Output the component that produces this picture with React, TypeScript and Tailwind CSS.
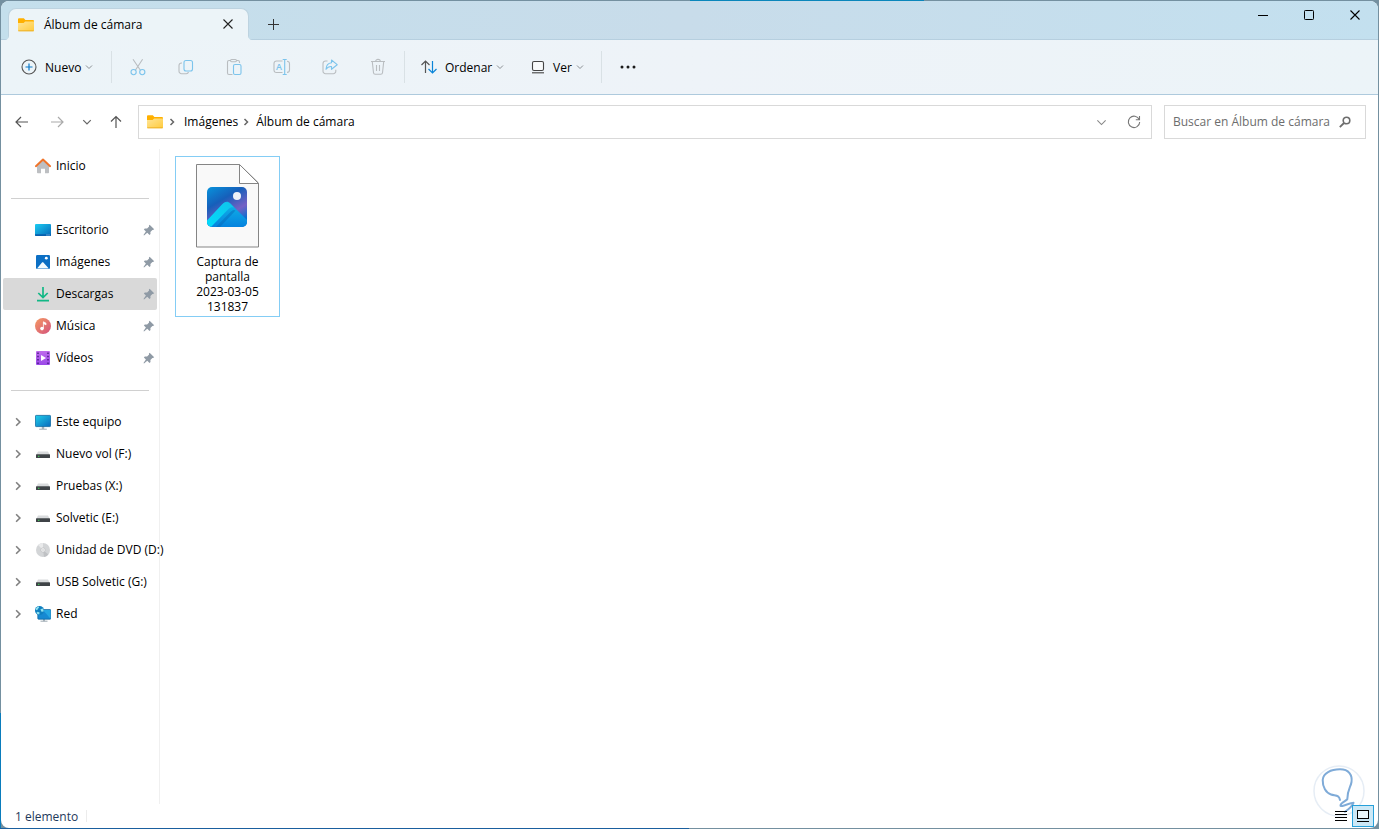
import { useState } from 'react'
import type { ReactNode } from 'react'

/* ---------- Icons ---------- */

function FolderIcon() {
    return (
        <svg width="16" height="14" viewBox="0 0 16 14" className="shrink-0">
            <defs>
                <linearGradient id="folder" x1="0" y1="0" x2="1" y2="1">
                    <stop offset="0" stopColor="#ffe596" />
                    <stop offset="1" stopColor="#ffcb3d" />
                </linearGradient>
            </defs>
            <path d="M0 1.5C0 .7.5.3 1.2.3h4.6l1.6 1.8h7.4c.7 0 1.2.4 1.2 1.2v4H0z" fill="#ffb000" />
            <path d="M0 4.9h5.6l1.5-1.3H16v8.6c0 .7-.5 1-1.2 1H1.2c-.7 0-1.2-.3-1.2-1z" fill="url(#folder)" />
            <path d="M.3 12.8h15.4" stroke="#e9a91c" strokeWidth=".8" />
        </svg>
    )
}

function Chevron({ className, dir = 'down', size = 8, width = 1 }: { className?: string; dir?: 'down' | 'right'; size?: number; width?: number }) {
    return (
        <svg width={size} height={size} viewBox="0 0 8 8" fill="none" stroke="currentColor" strokeWidth={width} className={className}>
            <path d={dir === 'down' ? 'M1 2.5l3 3 3-3' : 'M2.5 1l3 3-3 3'} />
        </svg>
    )
}

function CloseIcon({ size = 10 }: { size?: number }) {
    return (
        <svg width={size} height={size} viewBox="0 0 10 10" stroke="currentColor" strokeWidth="1.1">
            <path d="M.5.5l9 9M9.5.5l-9 9" />
        </svg>
    )
}

function PinIcon() {
    return (
        <svg width="12" height="12" viewBox="0 0 12 12" className="shrink-0 text-[#8f9aa5]" fill="currentColor">
            <path d="M6.6.8l4.6 4.4-1.2.9-.6-.2-2 2 .1 2.200-1 .8-2.200-2.100L1 11.400.5 11l2.400-3.400L.9 5.400l.9-1 2.300.2 2-2-.2-.9z" />
        </svg>
    )
}

function DriveIcon() {
    return (
        <svg width="16" height="16" viewBox="0 0 16 16">
            <path d="M3 5.500h10l1.800 3.200H1.200z" fill="#d9dbdd" />
            <rect x="1" y="8.300" width="14" height="3.700" rx=".6" fill="#3f4347" />
            <rect x="3" y="9.800" width="1.400" height="1" fill="#3ddc58" />
        </svg>
    )
}

const navIcons: Record<string, ReactNode> = {
    home: (
        <svg width="16" height="16" viewBox="0 0 16 16">
            <path d="M2 7l6-5.500L14 7v7.500c0 .5-.3.8-.8.8H10v-4.500H6v4.500H2.800c-.5 0-.8-.3-.8-.8z" fill="#bdbfc2" />
            <path d="M.9 8.200L8 1.500l7.100 6.700" fill="none" stroke="#f0742a" strokeWidth="1.900" strokeLinecap="round" strokeLinejoin="round" />
        </svg>
    ),
    desktop: (
        <svg width="16" height="16" viewBox="0 0 16 16">
            <defs>
                <linearGradient id="desk" x1="0" y1="0" x2="1" y2="1">
                    <stop offset="0" stopColor="#1ccdf2" />
                    <stop offset="1" stopColor="#0667b9" />
                </linearGradient>
            </defs>
            <rect y="2" width="16" height="12" rx="1" fill="url(#desk)" />
            <path d="M0 12.200h16v.8a1 1 0 01-1 1H1a1 1 0 01-1-1z" fill="#075fae" />
            <path d="M11.500 13h1M13.500 13h1" stroke="#bfe6ff" strokeWidth="1" />
        </svg>
    ),
    images: (
        <svg width="16" height="16" viewBox="0 0 16 16">
            <rect x="1" y="1" width="14" height="14" rx="1.200" fill="#0c6fc4" />
            <path d="M2 14.400l5-5.800c.4-.5 1-.5 1.400 0l5.400 5.800z" fill="#f3fbff" />
            <circle cx="11.300" cy="4.200" r="1.400" fill="#fff" />
        </svg>
    ),
    downloads: (
        <svg width="16" height="16" viewBox="0 0 16 16" fill="none" stroke="#12b886" strokeWidth="1.700">
            <path d="M8 1v10M3.300 7L8 11.600 12.700 7M2 14.700h12" />
        </svg>
    ),
    music: (
        <svg width="16" height="16" viewBox="0 0 16 16">
            <defs>
                <linearGradient id="music" x1="0" y1="0" x2="1" y2="1">
                    <stop offset="0" stopColor="#f59a62" />
                    <stop offset="1" stopColor="#d3517d" />
                </linearGradient>
            </defs>
            <circle cx="8" cy="8" r="8" fill="url(#music)" />
            <circle cx="7" cy="10.600" r="1.800" fill="#fff" />
            <path d="M8.400 10.600V3.800l2.600 1.400v1.600L8.400 5.600" fill="#fff" stroke="#fff" strokeWidth=".8" />
        </svg>
    ),
    videos: (
        <svg width="16" height="16" viewBox="0 0 16 16">
            <defs>
                <linearGradient id="video" x1="0" y1="0" x2="0" y2="1">
                    <stop offset="0" stopColor="#c06cec" />
                    <stop offset="1" stopColor="#9a48e8" />
                </linearGradient>
            </defs>
            <rect x="1" y="1" width="14" height="14" rx="1" fill="url(#video)" />
            <path d="M3 2.500v12M13 2.500v12" stroke="#4a1d86" strokeWidth="1.500" strokeDasharray="1.500 1.800" />
            <path d="M6 5l5 3-5 3z" fill="#fff" />
        </svg>
    ),
    pc: (
        <svg width="16" height="16" viewBox="0 0 16 16">
            <defs>
                <linearGradient id="pc" x1="0" y1="0" x2="1" y2="1">
                    <stop offset="0" stopColor="#20d0ea" />
                    <stop offset="1" stopColor="#0869bd" />
                </linearGradient>
            </defs>
            <path d="M6.800 12h2.400v3H6.800z" fill="#a9b4bd" />
            <path d="M4.200 15.200h7.600" stroke="#9eaab3" strokeWidth="1" />
            <rect x=".4" y="1.400" width="15.200" height="11.200" rx=".8" fill="url(#pc)" stroke="#0e679f" strokeWidth=".8" />
        </svg>
    ),
    drive: <DriveIcon />,
    dvd: (
        <svg width="16" height="16" viewBox="0 0 16 16">
            <circle cx="8" cy="8" r="7" fill="#d3d5d7" />
            <path d="M8 8L3 3a7 7 0 015-2z" fill="#e9eaeb" />
            <path d="M8 8l5.400 4.400A7 7 0 019 15z" fill="#bfc1c4" />
            <circle cx="8" cy="8" r="2.200" fill="#f4f4f4" stroke="#b4b6b8" strokeWidth=".6" />
            <circle cx="8" cy="8" r=".8" fill="#c5c7c9" />
        </svg>
    ),
    network: (
        <svg width="16" height="16" viewBox="0 0 16 16">
            <path d="M8 13h2v2.200H8z" fill="#a9b4bd" />
            <path d="M5.500 15.200h7" stroke="#9eaab3" strokeWidth="1" />
            <rect x="2.800" y="3.600" width="13" height="9.600" rx=".7" fill="#1789d2" stroke="#0b619a" strokeWidth=".7" />
            <path d="M8 4l7.500 8.800V4z" fill="#25a6e2" />
            <circle cx="4.500" cy="4.500" r="4.500" fill="#0f7fc0" />
            <path d="M.6 3.200C1.400 1.500 2.600.7 4 .5c.4 1-.4 1.700-1 2.200-.5.600-.4 1.300-1.300 1.500zM5.400 3.200l2.400-.8c.7.9 1 1.900.8 3L6.500 5.800zM2.600 5.800l2 .8-.4 1.900C2.900 8.400 2 7.600 1.400 6.700z" fill="#8fe3ef" />
        </svg>
    ),
}

const svgBase = { width: 18, height: 18, viewBox: '0 0 18 18', fill: 'none', strokeWidth: 1.1 }
const GREY = '#b9bdc0'
const BLUE = '#7cc4ec'

const fileActions = [
    {
        label: 'Cortar',
        icon: (
            <svg {...svgBase}>
                <path d="M4 1.200l7.600 11.300M13.600 1.200L6.200 12.500" stroke={GREY} />
                <circle cx="4.600" cy="14.100" r="2.600" stroke={BLUE} />
                <circle cx="13.300" cy="14.100" r="2.600" stroke={BLUE} />
            </svg>
        ),
    },
    {
        label: 'Copiar',
        icon: (
            <svg {...svgBase}>
                <path d="M5 5H4.500A2.500 2.500 0 002 7.500v5.700a2.500 2.500 0 002.500 2.500h4.800A2.500 2.500 0 0011.500 14" stroke={GREY} />
                <rect x="7" y="2.500" width="8.500" height="10.500" rx="2" stroke={BLUE} />
            </svg>
        ),
    },
    {
        label: 'Pegar',
        icon: (
            <svg {...svgBase}>
                <path d="M7.500 16.500H4a1.500 1.500 0 01-1.500-1.500V4A1.500 1.500 0 014 2.500h1.500M11.500 2.500H13A1.500 1.500 0 0114.500 4v1" stroke={GREY} />
                <rect x="5.500" y="1.500" width="6" height="2.200" rx="1.100" stroke={GREY} />
                <rect x="8.500" y="6.500" width="7.500" height="10" rx="1.500" stroke={BLUE} />
            </svg>
        ),
    },
    {
        label: 'Cambiar nombre',
        icon: (
            <svg {...svgBase}>
                <path d="M9.500 14.500h-6A2.500 2.500 0 011 12V5.500A2.500 2.500 0 013.500 3h6M14 3.200a2.500 2.500 0 012.500 2.500V12a2.500 2.500 0 01-2.500 2.400" stroke={GREY} />
                <path d="M9.700 1.500h4M9.700 16.500h4M11.700 1.500v15" stroke={BLUE} />
                <text x="3" y="12" fontSize="9" fontWeight="600" fill={BLUE} stroke="none">A</text>
            </svg>
        ),
    },
    {
        label: 'Compartir',
        icon: (
            <svg {...svgBase}>
                <path d="M6.500 3H4.500A2.500 2.500 0 002 5.500v7.700a2.500 2.500 0 002.500 2.500h7.800a2.500 2.500 0 002.500-2.500v-1.400" stroke={GREY} />
                <path d="M10.500 2l5.700 4.700-5.700 4.600V8.500C8 8.300 6.300 9.300 5 11.300c.2-3.800 2-6.100 5.500-6.500z" stroke={BLUE} strokeLinejoin="round" />
            </svg>
        ),
    },
    {
        label: 'Eliminar',
        icon: (
            <svg {...svgBase} stroke={GREY}>
                <path d="M2 3.500h14M6.700 3.300c0-2.600 4.600-2.600 4.600 0M3.300 3.700l1.200 11c.1 1 .7 1.600 1.700 1.600h5.600c1 0 1.600-.6 1.700-1.600l1.200-11M7.500 7v6M10.500 7v6" />
            </svg>
        ),
    },
]

/* ---------- Sidebar ---------- */

type NavEntry = { label: string; icon: string }

const pinned: NavEntry[] = [
    { label: 'Escritorio', icon: 'desktop' },
    { label: 'Imágenes', icon: 'images' },
    { label: 'Descargas', icon: 'downloads' },
    { label: 'Música', icon: 'music' },
    { label: 'Vídeos', icon: 'videos' },
]

const devices: NavEntry[] = [
    { label: 'Este equipo', icon: 'pc' },
    { label: 'Nuevo vol (F:)', icon: 'drive' },
    { label: 'Pruebas (X:)', icon: 'drive' },
    { label: 'Solvetic (E:)', icon: 'drive' },
    { label: 'Unidad de DVD (D:)', icon: 'dvd' },
    { label: 'USB Solvetic (G:)', icon: 'drive' },
    { label: 'Red', icon: 'network' },
]

function NavItem({ entry, active, pin, expandable, onClick }: { entry: NavEntry; active?: boolean; pin?: boolean; expandable?: boolean; onClick: () => void }) {
    return (
        <li>
            <button
                onClick={onClick}
                className={`flex h-8 w-full items-center rounded-xs pr-0.5 pl-2.5 text-left whitespace-nowrap ${active ? 'bg-[#d9d9d9]' : 'hover:bg-gray-100'}`}
            >
                <span className="w-[22px] shrink-0 text-[#808080]">
                    {expandable && <Chevron dir="right" size={10} width={1.3} />}
                </span>
                <span className="mr-[5px] shrink-0">{navIcons[entry.icon]}</span>
                <span className="flex-1">{entry.label}</span>
                {pin && <PinIcon />}
            </button>
        </li>
    )
}

function Divider() {
    return <hr className="mx-2 my-4 h-px border-0 bg-[#d0d0d0]" />
}

function ToolbarSeparator() {
    return <span className="mx-0.5 h-8 w-px bg-[#d9e1e5]" />
}

/* ---------- App ---------- */

export default function App() {
    const [selected, setSelected] = useState('Descargas')
    const [query, setQuery] = useState('')

    return (
        <div className="h-screen w-full overflow-hidden bg-[#7490a0] p-px font-['Open_Sans','Noto_Sans',sans-serif] text-xs text-black">
            <div className="relative flex h-full flex-col rounded-lg bg-white">

                {/* Wallpaper showing along the window edges */}
                <span className="absolute -top-px left-1/2 h-px w-[17%] bg-[#0a86bb]" />
                <span className="absolute -bottom-px -left-px h-[14%] w-px bg-[#0a7cbc]" />
                <span className="absolute -bottom-px -left-px h-px w-1/2 bg-[#1a5f9e]" />

                {/* Title bar */}
                <header className="flex h-[39px] shrink-0 items-end justify-between rounded-t-lg border-b border-[#b6cfdf] bg-linear-to-r from-[#c4dfec] via-[#c8dcea] to-[#c3e0ef] pl-[7px]">
                    <div className="flex items-end">
                        <div className="relative -mb-px flex h-8 w-[241px] items-center rounded-t-lg border border-b-0 border-[#bdd3e0] bg-[#ecf4f8] pl-[9px]">
                            <FolderIcon />
                            <h1 className="ml-2.5 flex-1 pt-px whitespace-nowrap">Álbum de cámara</h1>
                            <button aria-label="Cerrar pestaña" className="mr-1.5 flex size-7 items-center justify-center pb-px text-[#222]">
                                <CloseIcon />
                            </button>
                            <svg width="4" height="4" viewBox="0 0 4 4" className="absolute bottom-0 -left-1">
                                <path d="M4 0v4H0c2 0 4-2 4-4z" fill="#ecf4f8" />
                            </svg>
                            <svg width="4" height="4" viewBox="0 0 4 4" className="absolute -right-1 bottom-0">
                                <path d="M0 0v4h4C2 4 0 2 0 0z" fill="#ecf4f8" />
                            </svg>
                        </div>
                        <button aria-label="Nueva pestaña" className="ml-2 flex h-[30px] w-8 items-center justify-center text-[#333]">
                            <svg width="11" height="11" viewBox="0 0 11 11" stroke="currentColor">
                                <path d="M5.500 0v11M0 5.500h11" />
                            </svg>
                        </button>
                    </div>
                    <div className="flex self-start">
                        <button aria-label="Minimizar" className="flex h-7 w-[46px] items-center justify-center">
                            <svg width="10" height="10" viewBox="0 0 10 10" stroke="currentColor"><path d="M0 5.500h10" /></svg>
                        </button>
                        <button aria-label="Maximizar" className="flex h-7 w-[46px] items-center justify-center">
                            <svg width="10" height="10" viewBox="0 0 10 10" fill="none" stroke="currentColor"><rect x=".5" y=".5" width="9" height="9" rx=".8" /></svg>
                        </button>
                        <button aria-label="Cerrar" className="flex h-7 w-[46px] items-center justify-center">
                            <CloseIcon />
                        </button>
                    </div>
                </header>

                {/* Toolbar */}
                <div className="flex h-[55px] shrink-0 items-center border-b border-[#aecadd] bg-linear-to-r from-[#ecf4f8] via-[#eef3f8] to-[#ecf4f8] pl-3">
                    <button className="flex h-8 w-24 items-center pl-2">
                        <svg width="16" height="16" viewBox="0 0 16 16" fill="none">
                            <circle cx="8" cy="8" r="7" stroke="#555" strokeWidth="1.100" />
                            <path d="M8 4.500v7M4.500 8h7" stroke="#0a78c8" strokeWidth="1.200" />
                        </svg>
                        <span className="mr-1 ml-2 pt-0.5">Nuevo</span>
                        <Chevron className="text-[#8a8f93]" />
                    </button>
                    <ToolbarSeparator />
                    {fileActions.map((action) => (
                        <button key={action.label} aria-label={action.label} className="flex h-8 w-12 items-center justify-center">
                            {action.icon}
                        </button>
                    ))}
                    <ToolbarSeparator />
                    <button className="flex h-8 w-28 items-center pl-3.5">
                        <svg width="16" height="14" viewBox="0 0 16 14" fill="none" strokeWidth="1.200">
                            <path d="M4.500 13V1M.5 5l4-4 4 4" stroke="#555" />
                            <path d="M11.500 1v12M7.500 9l4 4 4-4" stroke="#0a84d8" />
                        </svg>
                        <span className="mr-1 ml-2 pt-0.5">Ordenar</span>
                        <Chevron className="text-[#8a8f93]" />
                    </button>
                    <button className="flex h-8 w-20 items-center pl-3">
                        <svg width="14" height="14" viewBox="0 0 14 14" fill="none" stroke="#444" strokeWidth="1.100">
                            <rect x="1.500" y="1.500" width="11" height="9" rx="1.500" fill="#f8fafb" />
                            <path d="M1 12.800h12" />
                        </svg>
                        <span className="mr-1 ml-2 pt-0.5">Ver</span>
                        <Chevron className="text-[#8a8f93]" />
                    </button>
                    <ToolbarSeparator />
                    <button aria-label="Ver más" className="flex h-8 w-12 items-center justify-center">
                        <svg width="16" height="4" viewBox="0 0 16 4" fill="#1a1a1a">
                            <circle cx="2" cy="2" r="1.500" />
                            <circle cx="8" cy="2" r="1.500" />
                            <circle cx="14" cy="2" r="1.500" />
                        </svg>
                    </button>
                </div>

                {/* Navigation and address */}
                <div className="flex shrink-0 items-center py-2.5 pr-3 pl-1">
                    <button aria-label="Atrás" className="flex h-8 w-[34px] items-center justify-center text-[#555]">
                        <svg width="14" height="12" viewBox="0 0 14 12" fill="none" stroke="currentColor" strokeWidth="1.200"><path d="M13 6H1M6 1L1 6l5 5" /></svg>
                    </button>
                    <button aria-label="Adelante" className="flex h-8 w-9 items-center justify-center text-[#aaa]">
                        <svg width="14" height="12" viewBox="0 0 14 12" fill="none" stroke="currentColor" strokeWidth="1.200"><path d="M1 6h12M8 1l5 5-5 5" /></svg>
                    </button>
                    <button aria-label="Ubicaciones recientes" className="flex h-8 w-6 items-center justify-center text-[#666]">
                        <Chevron size={10} />
                    </button>
                    <button aria-label="Subir" className="flex h-8 w-[34px] items-center justify-center text-[#555]">
                        <svg width="12" height="14" viewBox="0 0 12 14" fill="none" stroke="currentColor" strokeWidth="1.200"><path d="M6 13V1.500M1 6.500l5-5 5 5" /></svg>
                    </button>
                    <nav aria-label="Ruta" className="ml-[5px] flex h-[34px] flex-1 items-center border border-[#d9d9d9] pl-2">
                        <FolderIcon />
                        <Chevron dir="right" size={8} width={1.5} className="mr-2 ml-[5px] text-[#666]" />
                        <a href="#imagenes">Imágenes</a>
                        <Chevron dir="right" size={8} width={1.5} className="mr-1.5 ml-1 text-[#666]" />
                        <a href="#album" className="flex-1">Álbum de cámara</a>
                        <button aria-label="Ubicaciones anteriores" className="flex h-8 w-8 items-center justify-center text-[#888]">
                            <Chevron size={11} width={0.8} />
                        </button>
                        <button aria-label="Actualizar" className="flex h-8 w-[34px] items-center justify-center text-[#777]">
                            <svg width="14" height="14" viewBox="0 0 14 14" fill="none" stroke="currentColor" strokeWidth="1.100">
                                <path d="M12.200 4.500A5.700 5.700 0 1012.700 7M12.500 1v3.700H8.800" />
                            </svg>
                        </button>
                    </nav>
                    <label className="ml-3 flex h-[34px] w-[202px] items-center border border-[#d9d9d9] pr-3.5 pl-2">
                        <input
                            type="text"
                            aria-label="Buscar"
                            placeholder="Buscar en Álbum de cámara"
                            value={query}
                            onChange={(e) => setQuery(e.target.value)}
                            className="min-w-0 flex-1 bg-transparent outline-none placeholder:text-[#6d6d6d]"
                        />
                        <svg width="12" height="12" viewBox="0 0 12 12" fill="none" stroke="#6d6d6d">
                            <circle cx="7.500" cy="4.500" r="3.300" strokeWidth="1.600" />
                            <path d="M5 7L.8 11.200" strokeWidth="1.800" />
                        </svg>
                    </label>
                </div>

                <div className="flex min-h-0 flex-1">
                    {/* Sidebar */}
                    <aside className="w-[159px] shrink-0 border-r border-[#f0f0f0] px-0.5 pt-px">
                        <ul>
                            <NavItem entry={{ label: 'Inicio', icon: 'home' }} active={selected === 'Inicio'} onClick={() => setSelected('Inicio')} />
                        </ul>
                        <Divider />
                        <ul className="-mt-px">
                            {pinned.map((entry) => (
                                <NavItem key={entry.label} entry={entry} pin active={selected === entry.label} onClick={() => setSelected(entry.label)} />
                            ))}
                        </ul>
                        <Divider />
                        <ul className="-mt-px">
                            {devices.map((entry) => (
                                <NavItem key={entry.label} entry={entry} expandable active={selected === entry.label} onClick={() => setSelected(entry.label)} />
                            ))}
                        </ul>
                    </aside>

                    {/* Files */}
                    <main className="flex-1 pt-[7px] pl-[15px]">
                        <button className="flex w-[105px] flex-col items-center border border-[#84cdf5] px-3 pt-[7px] pb-0.5">
                            <svg width="65" height="84" viewBox="0 0 65 84">
                                <defs>
                                    <linearGradient id="photo" x1="0" y1="0" x2=".6" y2="1">
                                        <stop offset="0" stopColor="#0793dc" />
                                        <stop offset=".4" stopColor="#165fba" />
                                        <stop offset=".75" stopColor="#7561c4" />
                                        <stop offset="1" stopColor="#0a6fd0" />
                                    </linearGradient>
                                    <linearGradient id="hill" x1="1" y1="0" x2="0" y2="1">
                                        <stop offset="0" stopColor="#10c4ea" />
                                        <stop offset="1" stopColor="#02dbfb" />
                                    </linearGradient>
                                    <linearGradient id="slope" x1="0" y1="0" x2="0" y2="1">
                                        <stop offset="0" stopColor="#11b6e8" />
                                        <stop offset="1" stopColor="#0583de" />
                                    </linearGradient>
                                    <clipPath id="frame"><rect x="12" y="23" width="40" height="40" rx="5" /></clipPath>
                                </defs>
                                <path d="M1.500 .5H44.500L63.500 19v64H1.500z" fill="#f9f9f9" stroke="#858585" />
                                <path d="M44.500 .5V19.500H63.500z" fill="#fff" stroke="#858585" />
                                <g clipPath="url(#frame)">
                                    <rect x="12" y="23" width="40" height="40" fill="url(#photo)" />
                                    <path d="M28 40c2-2.500 5-3 7.500-.5L52 56v7H12v-6z" fill="url(#slope)" />
                                    <path d="M21 63l15-15.500c1.500-1.500 3-2 4.500-1L32 55.500 25 63z" fill="#0667b8" opacity=".45" />
                                    <path d="M11 57.500L27.500 40c2.500-2.500 5.500-2.500 8 0l3.500 3.500c-2-.7-3.500-.5-5.500 1.500L16 63h-5z" fill="url(#hill)" />
                                </g>
                                <circle cx="42" cy="32" r="4" fill="#edf1f8" />
                            </svg>
                            <span className="mt-1.5 leading-[15px]">Captura de pantalla 2023-03-05 131837</span>
                        </button>
                    </main>
                </div>

                {/* Status bar */}
                <footer className="flex h-6 shrink-0 items-center pr-1 pl-3.5 text-[#1e395b]">
                    <span className="pt-0.5">1 elemento</span>
                    <span className="ml-2 h-3 w-px bg-[#ececec]" />
                    <div className="relative z-10 ml-auto flex items-center text-black">
                        <button aria-label="Detalles" className="flex size-[22px] items-center justify-center">
                            <svg width="12" height="12" viewBox="0 0 12 12" stroke="currentColor"><path d="M0 1.500h12M0 4.500h12M0 7.500h12M0 10.500h12" /></svg>
                        </button>
                        <button aria-label="Iconos grandes" className="flex size-[22px] items-center justify-center border border-[#26a0da] bg-[#cce8f6]">
                            <svg width="12" height="12" viewBox="0 0 12 12" fill="none" stroke="currentColor">
                                <rect x=".5" y=".5" width="11" height="8" fill="#e9f6fc" />
                                <path d="M0 11.500h12" />
                            </svg>
                        </button>
                    </div>
                </footer>

                {/* Watermark */}
                <svg width="52" height="52" viewBox="0 0 52 52" fill="none" className="pointer-events-none absolute right-[13px] bottom-[11px]">
                    <circle cx="26" cy="26" r="25" fill="#fff" stroke="#e6edf5" strokeWidth="1.500" />
                    <path
                        d="M27 35c-1-5-4-4-9-5.500C13 28 9.500 22 9.700 15 10 8 18 4.300 27 4.300S39.500 10 38.500 17c-.7 5-4 7-4.200 17.300-2 2-6.500 3.500-6.800 6s9-2.300 13-2.500c-1 2.500-5 6.500-8.500 9"
                        stroke="#7fabd8"
                        strokeWidth="2"
                        strokeLinecap="round"
                        strokeLinejoin="round"
                    />
                </svg>
            </div>
        </div>
    )
}
